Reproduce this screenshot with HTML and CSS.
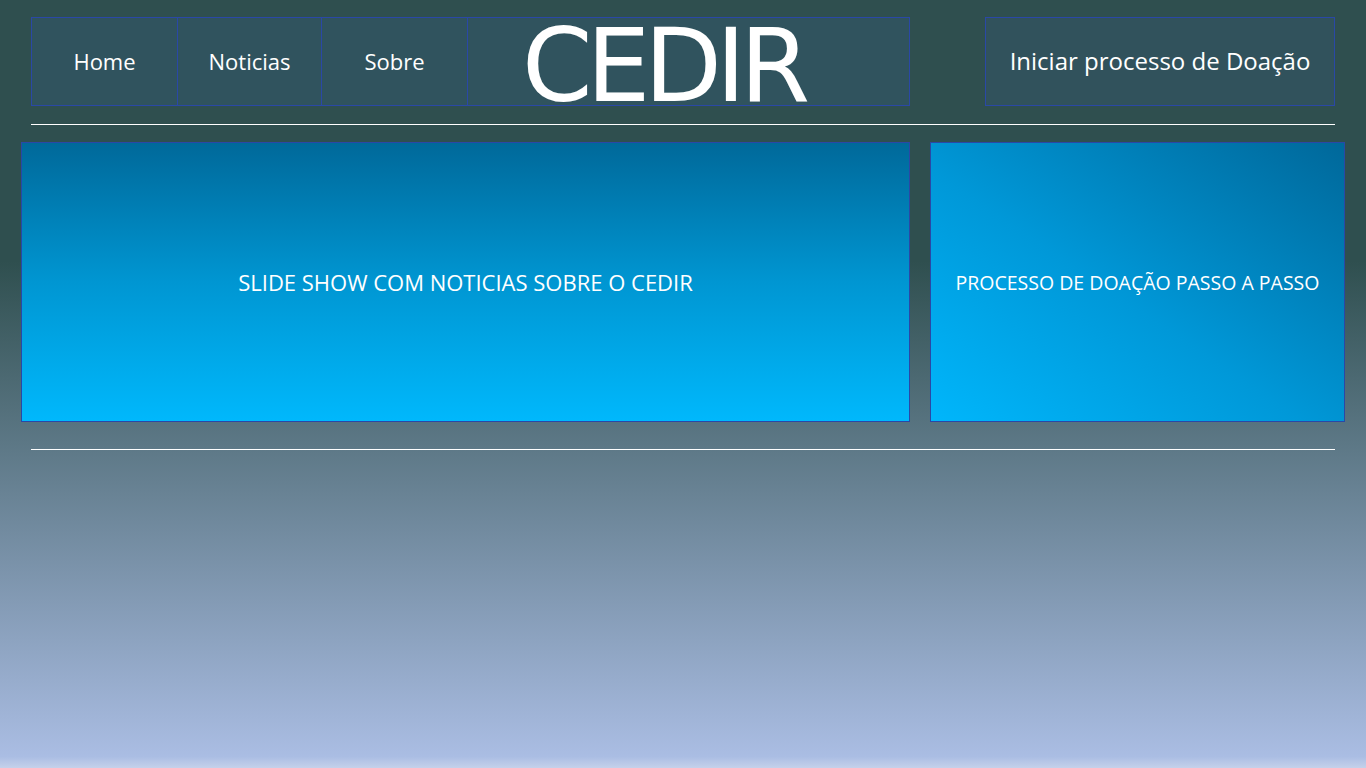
FILE: index.html
```html
<!DOCTYPE html>
<html lang="pt">
<head>
<meta charset="utf-8">
<title>CEDIR</title>
<link rel="stylesheet" href="styles.css">
</head>
<body>
<div class="page">
  <header class="topbar">
    <nav class="nav">
      <a class="nav-item home" href="#">Home</a>
      <a class="nav-item news" href="#">Noticias</a>
      <a class="nav-item about" href="#">Sobre</a>
      <div class="nav-item brand">CEDIR</div>
    </nav>
    <a class="donate" href="#">Iniciar processo de Doação</a>
  </header>
  <div class="rule"></div>
  <main class="content">
    <section class="slides">SLIDE SHOW COM NOTICIAS SOBRE O CEDIR</section>
    <section class="steps">PROCESSO DE DOAÇÃO PASSO A PASSO</section>
  </main>
  <div class="rule rule-bottom"></div>
</div>
</body>
</html>
```
FILE: styles.css
```css
html, body {
  margin: 0;
  padding: 0;
}
body {
  width: 1366px;
  height: 768px;
  overflow: hidden;
  background: linear-gradient(to bottom, #2f4f4f 0%, #2f4f4f 34%, #aabde3 98.5%, #c5d1ea 100%);
  font-family: "Open Sans", "Noto Sans", sans-serif;
  color: #ffffff;
}
.page {
  padding-top: 17px;
}
.topbar {
  display: flex;
  justify-content: space-between;
  margin: 0 31px;
  height: 89px;
}
.nav {
  display: flex;
  width: 879px;
  height: 89px;
  box-sizing: border-box;
  border: 1px solid #2a48a6;
  background: #30535e;
}
.nav-item {
  display: flex;
  align-items: center;
  justify-content: center;
  color: #ffffff;
  text-decoration: none;
  font-size: 22px;
  padding-bottom: 2px;
  box-sizing: border-box;
  border-right: 1px solid #2a48a6;
}
.home { width: 146px; }
.news { width: 144px; }
.about { width: 146px; }
.brand {
  flex: 1;
  border-right: none;
  justify-content: flex-start;
  padding-left: 54px;
  padding-bottom: 0;
  font-family: "DejaVu Sans", sans-serif;
  font-weight: 400;
  font-size: 101px;
  letter-spacing: -6px;
  line-height: 1;
  padding-top: 9px;
}
.donate {
  display: flex;
  align-items: center;
  justify-content: center;
  width: 350px;
  height: 89px;
  box-sizing: border-box;
  border: 1px solid #2a48a6;
  background: #31525c;
  color: #ffffff;
  text-decoration: none;
  font-size: 24px;
  padding-bottom: 2px;
}
.rule {
  height: 1px;
  background: #ffffff;
  margin: 18px 31px 0;
}
.rule-bottom {
  margin-top: 27px;
}
.content {
  display: flex;
  gap: 20px;
  margin: 17px 21px 0;
  height: 280px;
}
.slides, .steps {
  display: flex;
  align-items: center;
  justify-content: center;
  box-sizing: border-box;
  border: 1px solid #2a48a6;
  height: 280px;
}
.slides {
  width: 889px;
  background: linear-gradient(to bottom, #00699a 0%, #0096d2 50%, #00b8fc 100%);
  font-size: 22px;
}
.steps {
  width: 415px;
  background: linear-gradient(to top right, #00b6fb 0%, #0098d8 45%, #00689a 100%);
  font-size: 19.5px;
}
```
